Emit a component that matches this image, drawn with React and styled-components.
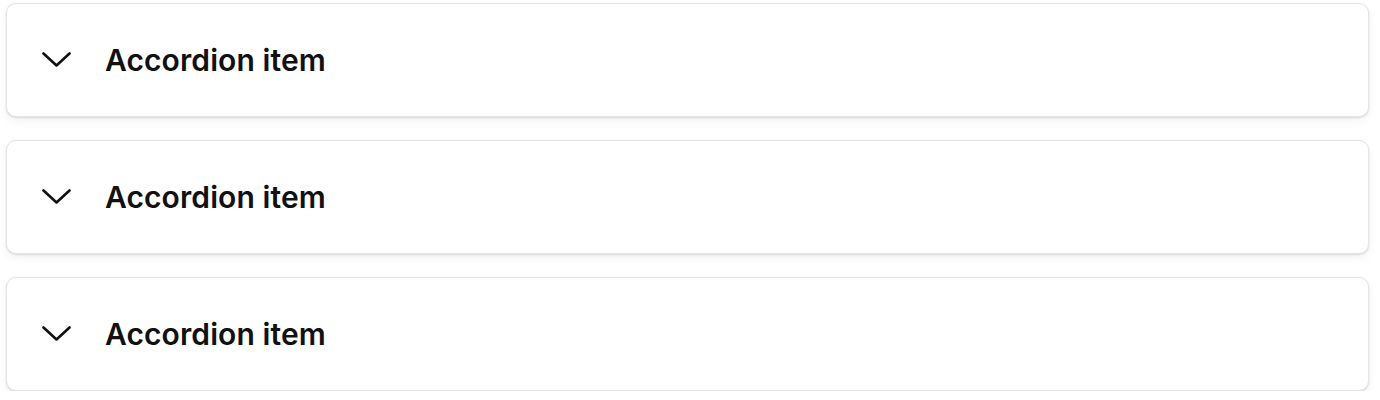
import React from "react";
import styled, { createGlobalStyle } from "styled-components";

const Global = createGlobalStyle`
  html, body { margin: 0; padding: 0; background: #ffffff; }
  body { font-family: Inter, "Noto Sans", sans-serif; }
`;

const List = styled.div`
  display: flex;
  flex-direction: column;
  gap: 23px;
  padding: 3px 11px 0 6px;
`;

const Item = styled.div`
  background: #ffffff;
  border: 1px solid #e4e4e4;
  border-radius: 10px;
  box-shadow: 0 1px 2px rgba(0, 0, 0, 0.12), 0 4px 10px rgba(0, 0, 0, 0.05);
`;

const Header = styled.button`
  display: flex;
  align-items: center;
  gap: 34px;
  width: 100%;
  height: 112px;
  padding: 0 0 0 35px;
  border: 0;
  background: transparent;
  font-family: Inter, "Noto Sans", sans-serif;
  font-size: 30px;
  font-weight: 600;
  color: #111111;
  letter-spacing: 0.1px;
  cursor: pointer;
  text-align: left;
`;

const Chevron = () => (
  <svg width="29" height="16" viewBox="0 0 29 16" fill="none">
    <polyline
      points="1.5,1.5 14.5,13.5 27.5,1.5"
      stroke="#111"
      strokeWidth="2.6"
      strokeLinecap="round"
      strokeLinejoin="round"
    />
  </svg>
);

export default function App() {
  return (
    <>
      <Global />
      <List>
        {[0, 1, 2].map((i) => (
          <Item key={i}>
            <Header>
              <Chevron />
              <span>Accordion item</span>
            </Header>
          </Item>
        ))}
      </List>
    </>
  );
}
